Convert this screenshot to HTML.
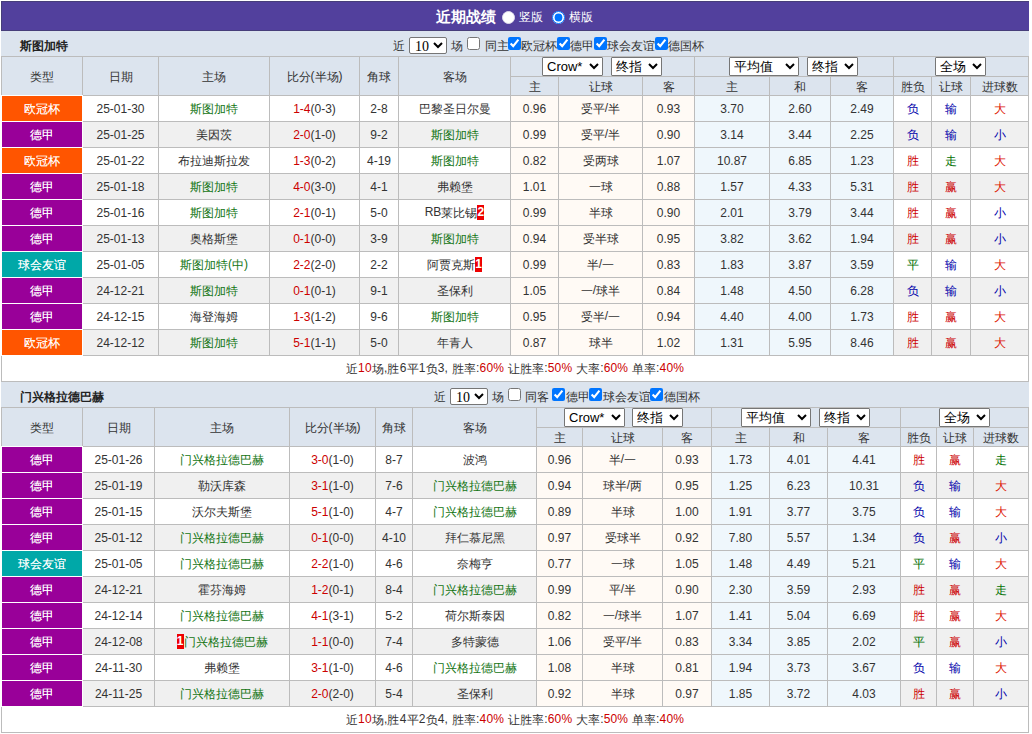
<!DOCTYPE html>
<html><head><meta charset="utf-8"><style>
html,body{margin:0;padding:0;background:#fff;}
body{font-family:"Liberation Sans",sans-serif;font-size:12px;color:#333;position:relative;width:1032px;height:734px;overflow:hidden;}
.title{position:absolute;left:1px;top:1px;width:1028px;height:30px;background:#52409D;box-shadow:inset 0 1px 0 #473E7A,inset 1px 0 0 #473E7A,inset 0 -1px 0 #473E7A;}
.title::after{content:"";position:absolute;left:0;right:0;top:30px;height:1px;background:#E6E2FA;}
.t{position:absolute;white-space:nowrap;line-height:14px;}
.ttl{color:#fff;font-weight:bold;font-size:15px;line-height:18px;}
.sm{color:#fff;}
.rd{position:absolute;margin:0;width:13px;height:13px;}
.r0{box-sizing:border-box;background:#fff;border-radius:50%;border:1px solid #E0DCEC;}
.sec{position:absolute;left:1px;width:1028px;height:25px;background:#DCE4EE;}
.nm{font-weight:bold;color:#222;}
.cb{position:absolute;margin:0;width:13px;height:13px;}
select{position:absolute;font-family:"Liberation Sans",sans-serif;font-size:13px;padding:0;margin:0;border:1px solid #767676;background:#fff;color:#000;box-sizing:border-box;}
.f10{width:38px;height:17px;font-family:"Liberation Serif",serif;font-size:14px;border-radius:2px;padding:0 0 1px 1px;}
.hs{height:19px;border-radius:1px;}
.tb{position:absolute;left:1px;border-collapse:collapse;table-layout:fixed;width:1027px;}
.tb th,.tb td{border:1px solid #BCBCBC;padding:0;text-align:center;white-space:nowrap;overflow:hidden;}
.tb th{background:#DCE4EE;font-weight:normal;color:#333;}
.tb tr.h1 th{height:19px;}
.tb tr.h2 th{height:18px;}
.tb td{height:25px;}
.tb tr.odd td{background:#fff;}
.tb tr.even td{background:#F0F0F0;}
.tb td.lg{color:#fff;position:relative;overflow:visible;text-shadow:0 0 0.6px rgba(255,255,255,0.7);}
.tb td.lg::after{content:'';position:absolute;left:-1px;top:-1px;right:-1px;bottom:-1px;border:1px solid #fff;}
.tb td.oc{background:#FFFAF5 !important;}
.tb td.oa{background:#EFF7FC !important;}
.c{position:relative;top:1px;}
.gt{color:#137513;}
.sc{color:#CC0000;}
.rs.r{color:#CC0000}.rs.o{color:#DD1100}.rs.b{color:#0000AA}.rs.g{color:#007000}
.rc{font-style:normal;background:#E00;color:#fff;font-weight:bold;display:inline-block;width:7px;height:15px;line-height:15px;vertical-align:-4px;text-align:center;overflow:hidden;font-size:12px;}
.sum td{background:#fff;height:25px;letter-spacing:0.18px;}
.sum em{font-style:normal;color:#CC0000;}

</style></head><body>
<div class="title"></div>
<span class="t ttl" style="left:436px;top:8px">近期战绩</span>
<span class="rd r0" style="left:502px;top:11px"></span>
<span class="t sm" style="left:519px;top:10px">竖版</span>
<input type="radio" class="rd" name="v" checked style="left:552px;top:11px">
<span class="t sm" style="left:569px;top:10px">横版</span>
<div class="sec" style="top:31px"></div>
<span class="t nm" style="left:20px;top:39px">斯图加特</span>
<span class="t" style="left:393px;top:39px">近</span>
<select class="f10" style="left:409px;top:37px"><option>10</option></select>
<span class="t" style="left:451px;top:39px">场</span>
<input type="checkbox" class="cb" style="left:467px;top:37px">
<span class="t" style="left:485px;top:39px">同主</span>
<input type="checkbox" class="cb" style="left:508px;top:37px" checked>
<span class="t" style="left:521px;top:39px">欧冠杯</span>
<input type="checkbox" class="cb" style="left:557px;top:37px" checked>
<span class="t" style="left:570px;top:39px">德甲</span>
<input type="checkbox" class="cb" style="left:594px;top:37px" checked>
<span class="t" style="left:607px;top:39px">球会友谊</span>
<input type="checkbox" class="cb" style="left:655px;top:37px" checked>
<span class="t" style="left:668px;top:39px">德国杯</span>
<table class="tb" style="top:56px">
<colgroup><col style="width:81px"><col style="width:76px"><col style="width:111px"><col style="width:90px"><col style="width:39px"><col style="width:112px"><col style="width:48px"><col style="width:84px"><col style="width:52px"><col style="width:75px"><col style="width:61px"><col style="width:63px"><col style="width:38px"><col style="width:39px"><col style="width:58px"></colgroup>
<tr class="h1"><th rowspan=2><span class="c">类型</span></th><th rowspan=2><span class="c">日期</span></th><th rowspan=2><span class="c">主场</span></th><th rowspan=2><span class="c">比分</span>(<span class="c">半场</span>)</th><th rowspan=2><span class="c">角球</span></th><th rowspan=2><span class="c">客场</span></th><th colspan=3></th><th colspan=3></th><th colspan=3></th></tr>
<tr class="h2"><th><span class="c">主</span></th><th><span class="c">让球</span></th><th><span class="c">客</span></th><th><span class="c">主</span></th><th><span class="c">和</span></th><th><span class="c">客</span></th><th><span class="c">胜负</span></th><th><span class="c">让球</span></th><th><span class="c">进球数</span></th></tr>
<tr class="odd"><td class="lg" style="background:#FF5500"><span class="c">欧冠杯</span></td><td>25-01-30</td><td><span class="gt"><span class="c">斯图加特</span></span></td><td><span class="sc">1-4</span>(0-3)</td><td>2-8</td><td><span class="c">巴黎圣日尔曼</span></td><td class="oc">0.96</td><td class="oc"><span class="c">受平</span>/<span class="c">半</span></td><td class="oc">0.93</td><td class="oa">3.70</td><td class="oa">2.60</td><td class="oa">2.49</td><td class="rs b"><span class="c">负</span></td><td class="rs b"><span class="c">输</span></td><td class="rs o"><span class="c">大</span></td></tr>
<tr class="even"><td class="lg" style="background:#990099"><span class="c">德甲</span></td><td>25-01-25</td><td><span class="c">美因茨</span></td><td><span class="sc">2-0</span>(1-0)</td><td>9-2</td><td><span class="gt"><span class="c">斯图加特</span></span></td><td class="oc">0.99</td><td class="oc"><span class="c">受平</span>/<span class="c">半</span></td><td class="oc">0.90</td><td class="oa">3.14</td><td class="oa">3.44</td><td class="oa">2.25</td><td class="rs b"><span class="c">负</span></td><td class="rs b"><span class="c">输</span></td><td class="rs b"><span class="c">小</span></td></tr>
<tr class="odd"><td class="lg" style="background:#FF5500"><span class="c">欧冠杯</span></td><td>25-01-22</td><td><span class="c">布拉迪斯拉发</span></td><td><span class="sc">1-3</span>(0-2)</td><td>4-19</td><td><span class="gt"><span class="c">斯图加特</span></span></td><td class="oc">0.82</td><td class="oc"><span class="c">受两球</span></td><td class="oc">1.07</td><td class="oa">10.87</td><td class="oa">6.85</td><td class="oa">1.23</td><td class="rs r"><span class="c">胜</span></td><td class="rs g"><span class="c">走</span></td><td class="rs o"><span class="c">大</span></td></tr>
<tr class="even"><td class="lg" style="background:#990099"><span class="c">德甲</span></td><td>25-01-18</td><td><span class="gt"><span class="c">斯图加特</span></span></td><td><span class="sc">4-0</span>(3-0)</td><td>4-1</td><td><span class="c">弗赖堡</span></td><td class="oc">1.01</td><td class="oc"><span class="c">一球</span></td><td class="oc">0.88</td><td class="oa">1.57</td><td class="oa">4.33</td><td class="oa">5.31</td><td class="rs r"><span class="c">胜</span></td><td class="rs r"><span class="c">赢</span></td><td class="rs o"><span class="c">大</span></td></tr>
<tr class="odd"><td class="lg" style="background:#990099"><span class="c">德甲</span></td><td>25-01-16</td><td><span class="gt"><span class="c">斯图加特</span></span></td><td><span class="sc">2-1</span>(0-1)</td><td>5-0</td><td>RB<span class="c">莱比锡</span><i class="rc">2</i></td><td class="oc">0.99</td><td class="oc"><span class="c">半球</span></td><td class="oc">0.90</td><td class="oa">2.01</td><td class="oa">3.79</td><td class="oa">3.44</td><td class="rs r"><span class="c">胜</span></td><td class="rs r"><span class="c">赢</span></td><td class="rs b"><span class="c">小</span></td></tr>
<tr class="even"><td class="lg" style="background:#990099"><span class="c">德甲</span></td><td>25-01-13</td><td><span class="c">奥格斯堡</span></td><td><span class="sc">0-1</span>(0-0)</td><td>3-9</td><td><span class="gt"><span class="c">斯图加特</span></span></td><td class="oc">0.94</td><td class="oc"><span class="c">受半球</span></td><td class="oc">0.95</td><td class="oa">3.82</td><td class="oa">3.62</td><td class="oa">1.94</td><td class="rs r"><span class="c">胜</span></td><td class="rs r"><span class="c">赢</span></td><td class="rs b"><span class="c">小</span></td></tr>
<tr class="odd"><td class="lg" style="background:#00A8A8"><span class="c">球会友谊</span></td><td>25-01-05</td><td><span class="gt"><span class="c">斯图加特</span>(<span class="c">中</span>)</span></td><td><span class="sc">2-2</span>(2-0)</td><td>2-2</td><td><span class="c">阿贾克斯</span><i class="rc">1</i></td><td class="oc">0.99</td><td class="oc"><span class="c">半</span>/<span class="c">一</span></td><td class="oc">0.83</td><td class="oa">1.83</td><td class="oa">3.87</td><td class="oa">3.59</td><td class="rs g"><span class="c">平</span></td><td class="rs b"><span class="c">输</span></td><td class="rs o"><span class="c">大</span></td></tr>
<tr class="even"><td class="lg" style="background:#990099"><span class="c">德甲</span></td><td>24-12-21</td><td><span class="gt"><span class="c">斯图加特</span></span></td><td><span class="sc">0-1</span>(0-1)</td><td>9-1</td><td><span class="c">圣保利</span></td><td class="oc">1.05</td><td class="oc"><span class="c">一</span>/<span class="c">球半</span></td><td class="oc">0.84</td><td class="oa">1.48</td><td class="oa">4.50</td><td class="oa">6.28</td><td class="rs b"><span class="c">负</span></td><td class="rs b"><span class="c">输</span></td><td class="rs b"><span class="c">小</span></td></tr>
<tr class="odd"><td class="lg" style="background:#990099"><span class="c">德甲</span></td><td>24-12-15</td><td><span class="c">海登海姆</span></td><td><span class="sc">1-3</span>(1-2)</td><td>9-6</td><td><span class="gt"><span class="c">斯图加特</span></span></td><td class="oc">0.95</td><td class="oc"><span class="c">受半</span>/<span class="c">一</span></td><td class="oc">0.94</td><td class="oa">4.40</td><td class="oa">4.00</td><td class="oa">1.73</td><td class="rs r"><span class="c">胜</span></td><td class="rs r"><span class="c">赢</span></td><td class="rs o"><span class="c">大</span></td></tr>
<tr class="even"><td class="lg" style="background:#FF5500"><span class="c">欧冠杯</span></td><td>24-12-12</td><td><span class="gt"><span class="c">斯图加特</span></span></td><td><span class="sc">5-1</span>(1-1)</td><td>5-0</td><td><span class="c">年青人</span></td><td class="oc">0.87</td><td class="oc"><span class="c">球半</span></td><td class="oc">1.02</td><td class="oa">1.31</td><td class="oa">5.95</td><td class="oa">8.46</td><td class="rs r"><span class="c">胜</span></td><td class="rs r"><span class="c">赢</span></td><td class="rs o"><span class="c">大</span></td></tr>
<tr class="sum"><td colspan=15><span class="c">近</span><em>10</em><span class="c">场</span>,<span class="c">胜</span>6<span class="c">平</span>1<span class="c">负</span>3, <span class="c">胜率</span>:<em>60%</em> <span class="c">让胜率</span>:<em>50%</em> <span class="c">大率</span>:<em>60%</em> <span class="c">单率</span>:<em>40%</em></td></tr>
</table>
<select class="hs" style="left:542px;top:57px;width:61px"><option>Crow*</option></select>
<select class="hs" style="left:611px;top:57px;width:51px"><option>终指</option></select>
<select class="hs" style="left:729px;top:57px;width:70px"><option>平均值</option></select>
<select class="hs" style="left:807px;top:57px;width:51px"><option>终指</option></select>
<select class="hs" style="left:935px;top:57px;width:51px"><option>全场</option></select>
<div class="sec" style="top:382px"></div>
<span class="t nm" style="left:20px;top:390px">门兴格拉德巴赫</span>
<span class="t" style="left:434px;top:390px">近</span>
<select class="f10" style="left:450px;top:388px"><option>10</option></select>
<span class="t" style="left:492px;top:390px">场</span>
<input type="checkbox" class="cb" style="left:508px;top:388px">
<span class="t" style="left:525px;top:390px">同客</span>
<input type="checkbox" class="cb" style="left:552px;top:388px" checked>
<span class="t" style="left:566px;top:390px">德甲</span>
<input type="checkbox" class="cb" style="left:589px;top:388px" checked>
<span class="t" style="left:603px;top:390px">球会友谊</span>
<input type="checkbox" class="cb" style="left:650px;top:388px" checked>
<span class="t" style="left:664px;top:390px">德国杯</span>
<table class="tb" style="top:407px">
<colgroup><col style="width:81px"><col style="width:72px"><col style="width:135px"><col style="width:86px"><col style="width:37px"><col style="width:124px"><col style="width:46px"><col style="width:80px"><col style="width:49px"><col style="width:58px"><col style="width:58px"><col style="width:73px"><col style="width:36px"><col style="width:37px"><col style="width:55px"></colgroup>
<tr class="h1"><th rowspan=2><span class="c">类型</span></th><th rowspan=2><span class="c">日期</span></th><th rowspan=2><span class="c">主场</span></th><th rowspan=2><span class="c">比分</span>(<span class="c">半场</span>)</th><th rowspan=2><span class="c">角球</span></th><th rowspan=2><span class="c">客场</span></th><th colspan=3></th><th colspan=3></th><th colspan=3></th></tr>
<tr class="h2"><th><span class="c">主</span></th><th><span class="c">让球</span></th><th><span class="c">客</span></th><th><span class="c">主</span></th><th><span class="c">和</span></th><th><span class="c">客</span></th><th><span class="c">胜负</span></th><th><span class="c">让球</span></th><th><span class="c">进球数</span></th></tr>
<tr class="odd"><td class="lg" style="background:#990099"><span class="c">德甲</span></td><td>25-01-26</td><td><span class="gt"><span class="c">门兴格拉德巴赫</span></span></td><td><span class="sc">3-0</span>(1-0)</td><td>8-7</td><td><span class="c">波鸿</span></td><td class="oc">0.96</td><td class="oc"><span class="c">半</span>/<span class="c">一</span></td><td class="oc">0.93</td><td class="oa">1.73</td><td class="oa">4.01</td><td class="oa">4.41</td><td class="rs r"><span class="c">胜</span></td><td class="rs r"><span class="c">赢</span></td><td class="rs g"><span class="c">走</span></td></tr>
<tr class="even"><td class="lg" style="background:#990099"><span class="c">德甲</span></td><td>25-01-19</td><td><span class="c">勒沃库森</span></td><td><span class="sc">3-1</span>(1-0)</td><td>7-6</td><td><span class="gt"><span class="c">门兴格拉德巴赫</span></span></td><td class="oc">0.94</td><td class="oc"><span class="c">球半</span>/<span class="c">两</span></td><td class="oc">0.95</td><td class="oa">1.25</td><td class="oa">6.23</td><td class="oa">10.31</td><td class="rs b"><span class="c">负</span></td><td class="rs b"><span class="c">输</span></td><td class="rs o"><span class="c">大</span></td></tr>
<tr class="odd"><td class="lg" style="background:#990099"><span class="c">德甲</span></td><td>25-01-15</td><td><span class="c">沃尔夫斯堡</span></td><td><span class="sc">5-1</span>(1-0)</td><td>4-7</td><td><span class="gt"><span class="c">门兴格拉德巴赫</span></span></td><td class="oc">0.89</td><td class="oc"><span class="c">半球</span></td><td class="oc">1.00</td><td class="oa">1.91</td><td class="oa">3.77</td><td class="oa">3.75</td><td class="rs b"><span class="c">负</span></td><td class="rs b"><span class="c">输</span></td><td class="rs o"><span class="c">大</span></td></tr>
<tr class="even"><td class="lg" style="background:#990099"><span class="c">德甲</span></td><td>25-01-12</td><td><span class="gt"><span class="c">门兴格拉德巴赫</span></span></td><td><span class="sc">0-1</span>(0-0)</td><td>4-10</td><td><span class="c">拜仁慕尼黑</span></td><td class="oc">0.97</td><td class="oc"><span class="c">受球半</span></td><td class="oc">0.92</td><td class="oa">7.80</td><td class="oa">5.57</td><td class="oa">1.34</td><td class="rs b"><span class="c">负</span></td><td class="rs r"><span class="c">赢</span></td><td class="rs b"><span class="c">小</span></td></tr>
<tr class="odd"><td class="lg" style="background:#00A8A8"><span class="c">球会友谊</span></td><td>25-01-05</td><td><span class="gt"><span class="c">门兴格拉德巴赫</span></span></td><td><span class="sc">2-2</span>(1-0)</td><td>4-6</td><td><span class="c">奈梅亨</span></td><td class="oc">0.77</td><td class="oc"><span class="c">一球</span></td><td class="oc">1.05</td><td class="oa">1.48</td><td class="oa">4.49</td><td class="oa">5.21</td><td class="rs g"><span class="c">平</span></td><td class="rs b"><span class="c">输</span></td><td class="rs o"><span class="c">大</span></td></tr>
<tr class="even"><td class="lg" style="background:#990099"><span class="c">德甲</span></td><td>24-12-21</td><td><span class="c">霍芬海姆</span></td><td><span class="sc">1-2</span>(0-1)</td><td>8-4</td><td><span class="gt"><span class="c">门兴格拉德巴赫</span></span></td><td class="oc">0.99</td><td class="oc"><span class="c">平</span>/<span class="c">半</span></td><td class="oc">0.90</td><td class="oa">2.30</td><td class="oa">3.59</td><td class="oa">2.93</td><td class="rs r"><span class="c">胜</span></td><td class="rs r"><span class="c">赢</span></td><td class="rs g"><span class="c">走</span></td></tr>
<tr class="odd"><td class="lg" style="background:#990099"><span class="c">德甲</span></td><td>24-12-14</td><td><span class="gt"><span class="c">门兴格拉德巴赫</span></span></td><td><span class="sc">4-1</span>(3-1)</td><td>5-2</td><td><span class="c">荷尔斯泰因</span></td><td class="oc">0.82</td><td class="oc"><span class="c">一</span>/<span class="c">球半</span></td><td class="oc">1.07</td><td class="oa">1.41</td><td class="oa">5.04</td><td class="oa">6.69</td><td class="rs r"><span class="c">胜</span></td><td class="rs r"><span class="c">赢</span></td><td class="rs o"><span class="c">大</span></td></tr>
<tr class="even"><td class="lg" style="background:#990099"><span class="c">德甲</span></td><td>24-12-08</td><td><i class="rc">1</i><span class="gt"><span class="c">门兴格拉德巴赫</span></span></td><td><span class="sc">1-1</span>(0-0)</td><td>7-4</td><td><span class="c">多特蒙德</span></td><td class="oc">1.06</td><td class="oc"><span class="c">受平</span>/<span class="c">半</span></td><td class="oc">0.83</td><td class="oa">3.34</td><td class="oa">3.85</td><td class="oa">2.02</td><td class="rs g"><span class="c">平</span></td><td class="rs r"><span class="c">赢</span></td><td class="rs b"><span class="c">小</span></td></tr>
<tr class="odd"><td class="lg" style="background:#990099"><span class="c">德甲</span></td><td>24-11-30</td><td><span class="c">弗赖堡</span></td><td><span class="sc">3-1</span>(1-0)</td><td>4-6</td><td><span class="gt"><span class="c">门兴格拉德巴赫</span></span></td><td class="oc">1.08</td><td class="oc"><span class="c">半球</span></td><td class="oc">0.81</td><td class="oa">1.94</td><td class="oa">3.73</td><td class="oa">3.67</td><td class="rs b"><span class="c">负</span></td><td class="rs b"><span class="c">输</span></td><td class="rs o"><span class="c">大</span></td></tr>
<tr class="even"><td class="lg" style="background:#990099"><span class="c">德甲</span></td><td>24-11-25</td><td><span class="gt"><span class="c">门兴格拉德巴赫</span></span></td><td><span class="sc">2-0</span>(2-0)</td><td>5-4</td><td><span class="c">圣保利</span></td><td class="oc">0.92</td><td class="oc"><span class="c">半球</span></td><td class="oc">0.97</td><td class="oa">1.85</td><td class="oa">3.72</td><td class="oa">4.03</td><td class="rs r"><span class="c">胜</span></td><td class="rs r"><span class="c">赢</span></td><td class="rs b"><span class="c">小</span></td></tr>
<tr class="sum"><td colspan=15><span class="c">近</span><em>10</em><span class="c">场</span>,<span class="c">胜</span>4<span class="c">平</span>2<span class="c">负</span>4, <span class="c">胜率</span>:<em>40%</em> <span class="c">让胜率</span>:<em>60%</em> <span class="c">大率</span>:<em>50%</em> <span class="c">单率</span>:<em>40%</em></td></tr>
</table>
<select class="hs" style="left:564px;top:408px;width:61px"><option>Crow*</option></select>
<select class="hs" style="left:632px;top:408px;width:51px"><option>终指</option></select>
<select class="hs" style="left:741px;top:408px;width:70px"><option>平均值</option></select>
<select class="hs" style="left:819px;top:408px;width:51px"><option>终指</option></select>
<select class="hs" style="left:939px;top:408px;width:51px"><option>全场</option></select>
</body></html>
